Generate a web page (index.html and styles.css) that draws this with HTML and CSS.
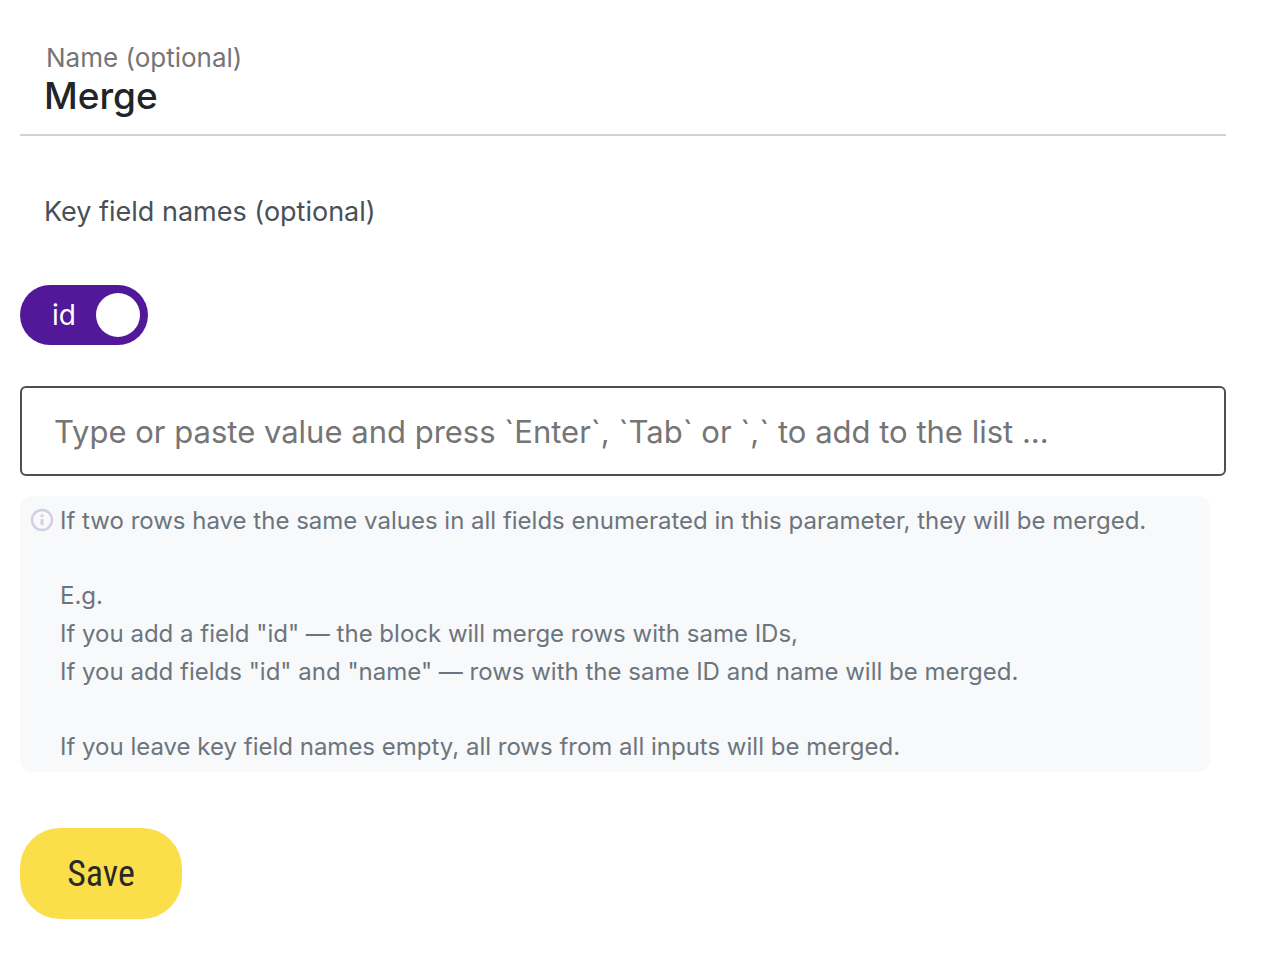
FILE: index.html
```html
<!DOCTYPE html>
<html lang="en">
<head>
<meta charset="utf-8">
<title>Merge</title>
<link rel="stylesheet" href="styles.css">
</head>
<body>
<form class="settings">
  <div class="name-field">
    <label class="name-label" for="name">Name (optional)</label>
    <input class="name-input" id="name" type="text" value="Merge">
  </div>
  <label class="keys-label" for="keys">Key field names (optional)</label>
  <div class="chips">
    <label class="chip"><span>id</span><input class="chip-switch" type="checkbox" checked></label>
  </div>
  <input class="keys-input" id="keys" type="text" placeholder="Type or paste value and press `Enter`, `Tab` or `,` to add to the list ...">
  <div class="hint">
    <svg class="hint-icon" viewBox="0 0 24 24" fill="none" stroke="#d2cfe4" stroke-width="2.4" aria-hidden="true"><circle cx="12" cy="12" r="10"/><path stroke-width="2.8" d="M12 11v6M12 6.5v2.5"/></svg>
    <div class="hint-text">
      <p>If two rows have the same values in all fields enumerated in this parameter, they will be merged.</p>
      <p>E.g.<br>If you add a field "id" — the block will merge rows with same IDs,<br>If you add fields "id" and "name" — rows with the same ID and name will be merged.</p>
      <p>If you leave key field names empty, all rows from all inputs will be merged.</p>
    </div>
  </div>
  <button class="save" type="button">Save</button>
</form>
</body>
</html>
```
FILE: styles.css
```css
* { box-sizing: border-box; }
body { margin: 0; background: #fff; font-family: Inter, "Liberation Sans", sans-serif; color: #212529; }
.settings { display: flex; flex-direction: column; align-items: flex-start; padding: 42px 54px 40px 20px; }
.name-field { display: flex; flex-direction: column; width: 100%; padding: 0 24px; border-bottom: 2px solid #ced4da; }
.name-label { padding-left: 2px; font-size: 26px; line-height: 32px; color: #757575; }
.name-input { width: 100%; height: 60px; padding: 0 0 18px; border: 0; outline: 0; background: none; font: 500 37px/42px Inter, sans-serif; color: #212529; }
.keys-label { margin: 56px 0 0 24px; font-size: 27px; line-height: 40px; color: #495057; }
.chips { display: flex; margin: 53px 0 41px; }
.chip { display: flex; align-items: center; gap: 20px; height: 60px; padding: 0 8px 0 32px; border-radius: 30px; background: #51189a; color: #fff; font-size: 28px; line-height: 40px; }
.chip-switch { appearance: none; width: 44px; height: 44px; margin: 0; border-radius: 50%; background: #fff; }
.keys-input { width: 100%; height: 90px; padding: 0 32px; border: 2px solid #495057; border-radius: 6px; background: #fff; font: 31px/40px Inter, sans-serif; color: #212529; }
.keys-input::placeholder { color: #757575; opacity: 1; }
.hint { display: flex; gap: 6px; align-self: stretch; margin: 20px 16px 0 0; padding: 6px 10px; border-radius: 12px; background: #f8f9fa; font-size: 24px; line-height: 38px; color: #6c757d; }
.hint-icon { flex: none; width: 24px; height: 24px; margin-top: 6px; }
.hint-text { display: flex; flex-direction: column; gap: 37px; }
.hint-text p { margin: 0; }
.save { min-width: 162px; height: 91px; margin-top: 56px; padding: 0 40px; border: 0; border-radius: 40px; background: #fadf4b; font: 400 36px/44px "Roboto Condensed", Roboto, sans-serif; color: #292927; }
```
